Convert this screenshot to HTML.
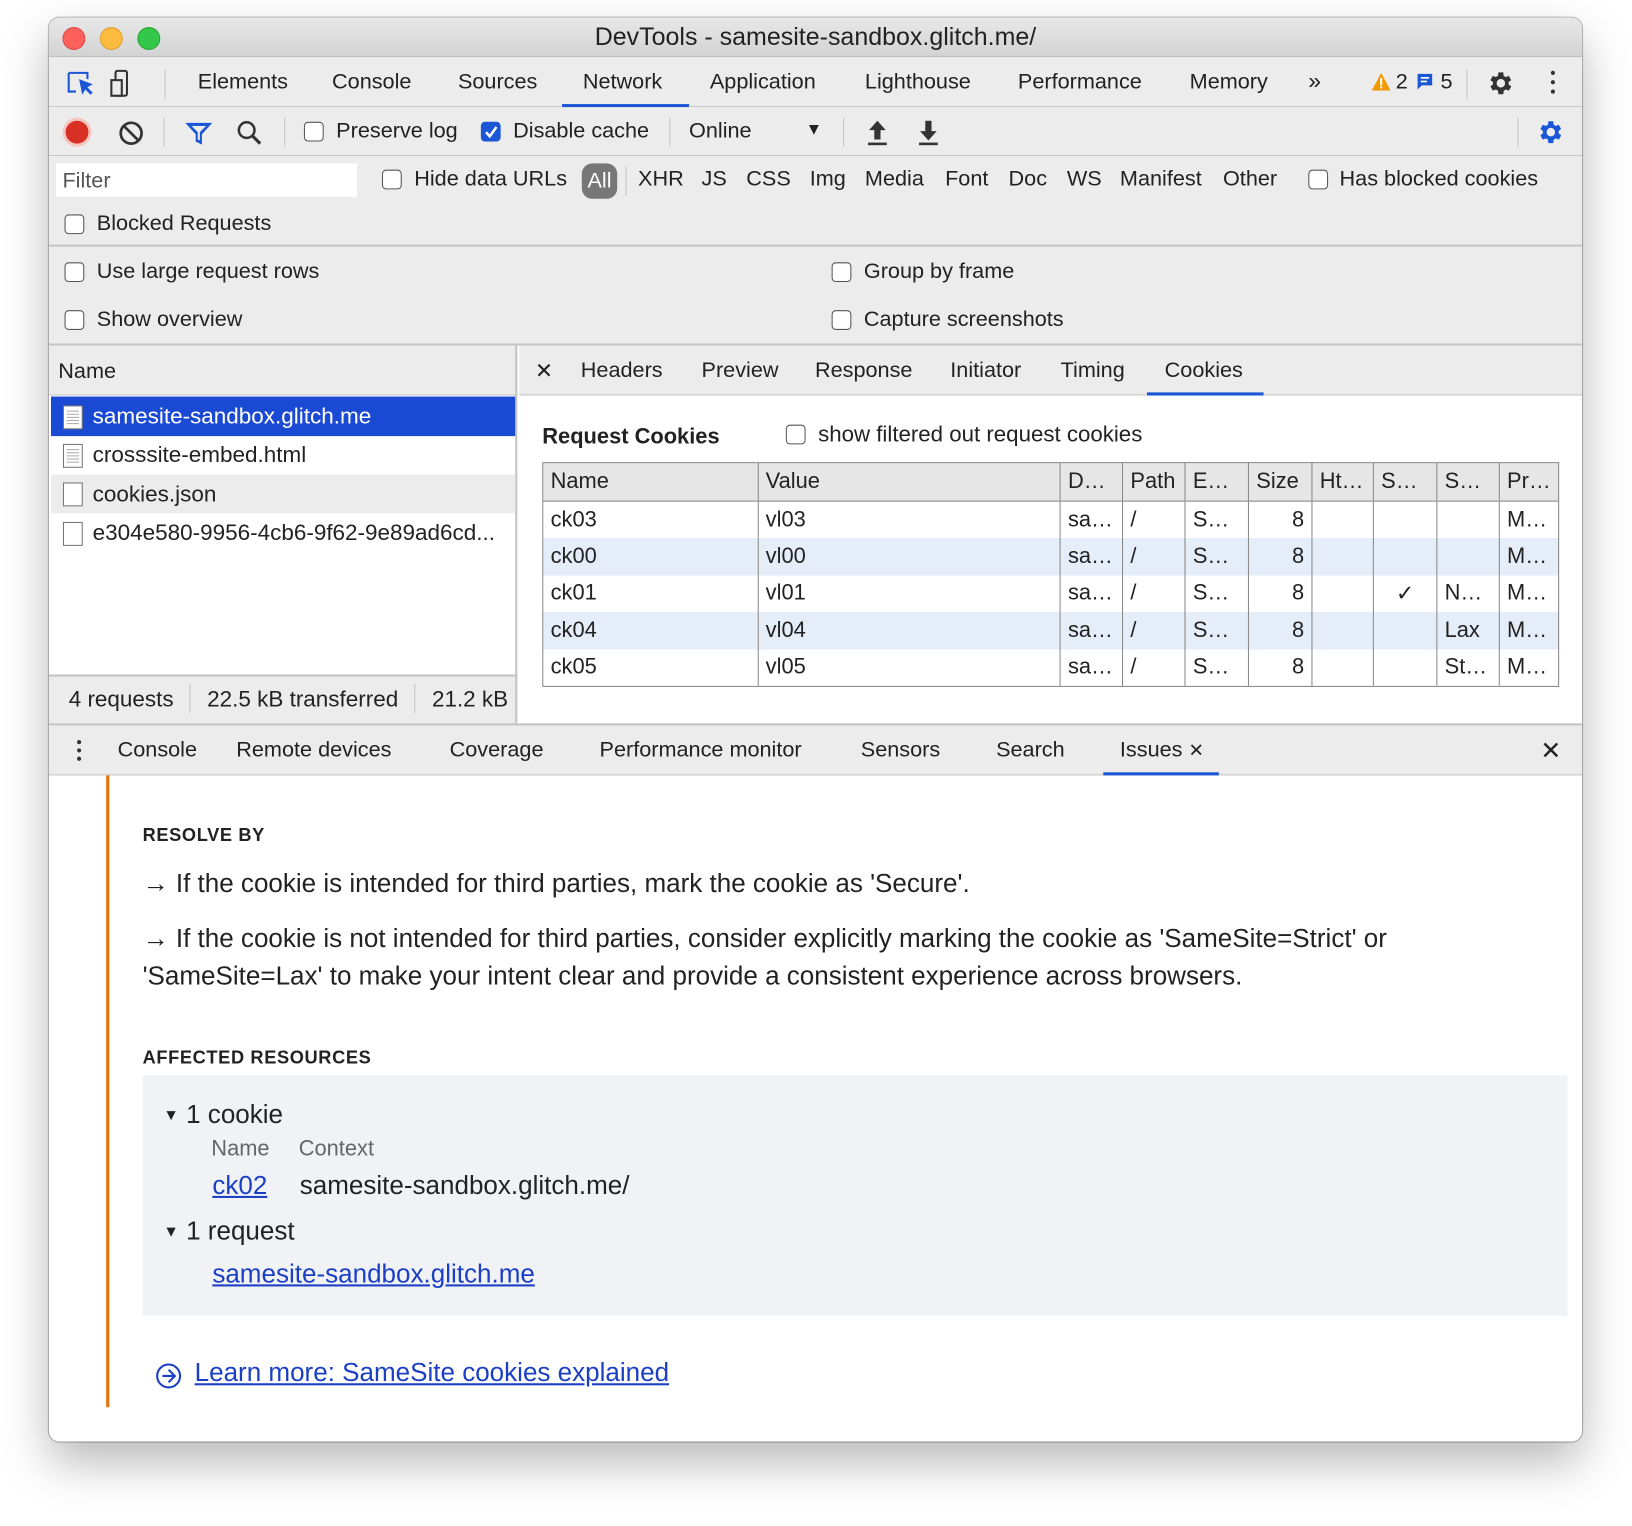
<!DOCTYPE html>
<html><head><meta charset="utf-8"><style>
*{box-sizing:border-box;margin:0;padding:0}
html,body{width:1632px;height:1525px;overflow:hidden;background:#fff}
#w{position:absolute;left:0;top:0;width:1568px;height:1466px;transform:scale(1.04082);transform-origin:0 0;font-family:"Liberation Sans",sans-serif;font-size:20.8px;color:#222}
.a{position:absolute;white-space:nowrap}
.win{position:absolute;left:47px;top:17px;width:1473px;height:1368px;border-radius:10px;overflow:hidden;background:#fff;box-shadow:0 20px 45px rgba(0,0,0,.28),0 0 0 1px #bbb}
.g{background:#ececec}
.cb{position:absolute;width:19px;height:19px;border:1.5px solid #555;border-radius:4px;background:#fff}
.hl{position:absolute;height:1px;background:#c4c4c4}
.vl{position:absolute;width:1px;background:#c4c4c4}
.dot{position:absolute;width:22px;height:22px;border-radius:50%}
.l{font-size:21.6px}
table{border-collapse:collapse}
td{border-left:1.5px solid #888;padding:0 7px;height:35.5px;font-size:21px}
.i{font-size:25px}
</style></head><body><div id="w">
<div class="win">
<div class="a" style="left:0;top:0;width:1473px;height:38px;background:linear-gradient(#e8e8e8,#d3d3d3);border-bottom:1px solid #b5b5b5"></div>
<div class="dot" style="left:13px;top:9px;background:#fc605c;border:1px solid #de4a46"></div>
<div class="dot" style="left:49px;top:9px;background:#fdbc40;border:1px solid #de9f2f"></div>
<div class="dot" style="left:85px;top:9px;background:#34c84a;border:1px solid #25a636"></div>
<div class="a" style="left:0;width:1473px;top:5px;text-align:center;font-size:24px;color:#222">DevTools - samesite-sandbox.glitch.me/</div>
<div class="a g" style="left:0;top:38px;width:1473px;height:48px;border-bottom:1px solid #c4c4c4"></div>
<svg class="a" style="left:16px;top:50px" width="60" height="28" viewBox="0 0 60 28"><path d="M3 3h18v6M3 3v18h7" fill="none" stroke="#1a56d6" stroke-width="2"/><path d="M13 9l3 15 3-5 5 5 2-2-5-5 5-3z" fill="#1a56d6"/><rect x="53" y="1" width="11" height="24" rx="2" fill="none" stroke="#333" stroke-width="2" transform="translate(-5 0)"/><rect x="44" y="10" width="10" height="15" fill="#ececec" stroke="#333" stroke-width="2"/></svg>
<div class="vl" style="left:111px;top:50px;height:28px"></div>
<div class="a" style="left:143px;top:50px">Elements</div>
<div class="a" style="left:272px;top:50px">Console</div>
<div class="a" style="left:393px;top:50px">Sources</div>
<div class="a" style="left:513px;top:50px">Network</div>
<div class="a" style="left:493px;top:83px;width:122px;height:3px;background:#1a56d6"></div>
<div class="a" style="left:635px;top:50px">Application</div>
<div class="a" style="left:784px;top:50px">Lighthouse</div>
<div class="a" style="left:931px;top:50px">Performance</div>
<div class="a" style="left:1096px;top:50px">Memory</div>
<div class="a" style="left:1210px;top:48px;font-size:22px">»</div>
<svg class="a" style="left:1270px;top:52px" width="20" height="20"><path d="M10 1L19 18H1z" fill="#f29900"/><rect x="9" y="6" width="2" height="7" fill="#fff"/><rect x="9" y="14" width="2" height="2" fill="#fff"/></svg>
<div class="a" style="left:1294px;top:50px">2</div>
<svg class="a" style="left:1313px;top:53px" width="18" height="18"><path d="M2 1h14v11H6l-4 4z" fill="#1a56d6"/><rect x="5" y="4" width="8" height="1.6" fill="#fff"/><rect x="5" y="7.5" width="6" height="1.6" fill="#fff"/></svg>
<div class="a" style="left:1337px;top:50px">5</div>
<div class="vl" style="left:1362px;top:50px;height:28px"></div>
<svg class="a" style="left:1381px;top:49px" width="28" height="28" viewBox="0 0 24 24"><path fill="#333" d="M19.4 13a7.5 7.5 0 000-2l2.1-1.6-2-3.5-2.5 1a7 7 0 00-1.7-1L15 3h-4l-.4 2.9a7 7 0 00-1.7 1l-2.5-1-2 3.5L6.5 11a7.5 7.5 0 000 2l-2.1 1.6 2 3.5 2.5-1a7 7 0 001.7 1L11 21h4l.4-2.9a7 7 0 001.7-1l2.5 1 2-3.5zM13 15.5a3.5 3.5 0 110-7 3.5 3.5 0 010 7z" transform="translate(-1 0)"/></svg>
<div class="a" style="left:1443px;top:51px;width:4px;height:4px;border-radius:2px;background:#333;box-shadow:0 9px 0 #333,0 18px 0 #333"></div>
<div class="a g" style="left:0;top:86px;width:1473px;height:47px;border-bottom:1px solid #c4c4c4"></div>
<div class="dot" style="left:16px;top:99px;background:#d93025;box-shadow:0 0 0 3px #f4c6c2"></div>
<svg class="a" style="left:66px;top:98px" width="26" height="26"><circle cx="13" cy="13" r="10" fill="none" stroke="#333" stroke-width="2.6"/><path d="M6 6l14 14" stroke="#333" stroke-width="2.6"/></svg>
<div class="vl" style="left:110px;top:96px;height:28px"></div>
<svg class="a" style="left:130px;top:99px" width="28" height="24"><path d="M1 2h26L17 13v10l-6-3v-7z" fill="#1a56d6"/><path d="M7 5h14l-6 6v8l-2-1v-7z" fill="#ececec"/></svg>
<svg class="a" style="left:180px;top:98px" width="26" height="26"><circle cx="10" cy="10" r="7.5" fill="none" stroke="#333" stroke-width="2.4"/><path d="M15 15l8 8" stroke="#333" stroke-width="3"/></svg>
<div class="vl" style="left:226px;top:96px;height:28px"></div>
<div class="cb" style="left:245px;top:100px"></div>
<div class="a" style="left:276px;top:97px">Preserve log</div>
<div class="cb" style="left:415px;top:100px;background:#1a56d6;border-color:#1a56d6"></div>
<svg class="a" style="left:418px;top:103px" width="14" height="14"><path d="M2 7l3.5 4L12 2" fill="none" stroke="#fff" stroke-width="2.4"/></svg>
<div class="a" style="left:446px;top:97px">Disable cache</div>
<div class="vl" style="left:596px;top:96px;height:28px"></div>
<div class="a" style="left:615px;top:97px">Online</div>
<div class="a" style="left:727px;top:99px;font-size:16px">▼</div>
<div class="vl" style="left:763px;top:96px;height:28px"></div>
<svg class="a" style="left:785px;top:98px" width="22" height="26"><path d="M11 1L3 10h5v9h6v-9h5z" fill="#333"/><rect x="2" y="22" width="18" height="2.5" fill="#333"/></svg>
<svg class="a" style="left:834px;top:98px" width="22" height="26"><path d="M11 20L3 11h5V1h6v10h5z" fill="#333"/><rect x="2" y="22" width="18" height="2.5" fill="#333"/></svg>
<div class="vl" style="left:1411px;top:96px;height:28px"></div>
<svg class="a" style="left:1429px;top:96px" width="28" height="28" viewBox="0 0 24 24"><path fill="#1a56d6" d="M19.4 13a7.5 7.5 0 000-2l2.1-1.6-2-3.5-2.5 1a7 7 0 00-1.7-1L15 3h-4l-.4 2.9a7 7 0 00-1.7 1l-2.5-1-2 3.5L6.5 11a7.5 7.5 0 000 2l-2.1 1.6 2 3.5 2.5-1a7 7 0 001.7 1L11 21h4l.4-2.9a7 7 0 001.7-1l2.5 1 2-3.5zM13 15.5a3.5 3.5 0 110-7 3.5 3.5 0 010 7z" transform="translate(-1 0)"/></svg>
<div class="a g" style="left:0;top:133px;width:1473px;height:87px;border-bottom:2px solid #c4c4c4"></div>
<div class="a" style="left:7px;top:140px;width:289px;height:32px;background:#fff"></div>
<div class="a" style="left:13px;top:145px;color:#555">Filter</div>
<div class="cb" style="left:320px;top:146px"></div>
<div class="a" style="left:351px;top:143px">Hide data URLs</div>
<div class="a" style="left:512px;top:140px;width:34px;height:34px;border-radius:10px;background:#777;color:#fff;text-align:center;line-height:34px">All</div>
<div class="vl" style="left:554px;top:143px;height:28px"></div>
<div class="a" style="left:566px;top:143px">XHR</div>
<div class="a" style="left:627px;top:143px">JS</div>
<div class="a" style="left:670px;top:143px">CSS</div>
<div class="a" style="left:731px;top:143px">Img</div>
<div class="a" style="left:784px;top:143px">Media</div>
<div class="a" style="left:861px;top:143px">Font</div>
<div class="a" style="left:922px;top:143px">Doc</div>
<div class="a" style="left:978px;top:143px">WS</div>
<div class="a" style="left:1029px;top:143px">Manifest</div>
<div class="a" style="left:1128px;top:143px">Other</div>
<div class="cb" style="left:1210px;top:146px"></div>
<div class="a" style="left:1240px;top:143px">Has blocked cookies</div>
<div class="cb" style="left:15px;top:189px"></div>
<div class="a" style="left:46px;top:186px">Blocked Requests</div>
<div class="a g" style="left:0;top:220px;width:1473px;height:95px;border-bottom:2px solid #c4c4c4"></div>
<div class="cb" style="left:15px;top:235px"></div><div class="a" style="left:46px;top:232px">Use large request rows</div>
<div class="cb" style="left:752px;top:235px"></div><div class="a" style="left:783px;top:232px">Group by frame</div>
<div class="cb" style="left:15px;top:281px"></div><div class="a" style="left:46px;top:278px">Show overview</div>
<div class="cb" style="left:752px;top:281px"></div><div class="a" style="left:783px;top:278px">Capture screenshots</div>
<div class="a g" style="left:0;top:315px;width:450px;height:48px;border-bottom:1px solid #c4c4c4;border-right:2px solid #c4c4c4"></div>
<div class="a" style="left:9px;top:328px">Name</div>
<div class="a" style="left:0;top:363px;width:450px;height:268px;background:#fff;border-right:2px solid #c4c4c4"></div>
<div class="a" style="left:2px;top:364px;width:446px;height:38px;background:#1a49d4"></div>
<div class="a" style="left:2px;top:439px;width:446px;height:37px;background:#ececec"></div>
<svg class="a" style="left:13px;top:372px" width="20" height="24"><rect x="1" y="1" width="18" height="22" fill="#fff" stroke="#777"/><path d="M4 6h12M4 9h12M4 12h12M4 15h12M4 18h12" stroke="#aaa"/></svg>
<div class="a l" style="left:42px;top:370px;color:#fff">samesite-sandbox.glitch.me</div>
<svg class="a" style="left:13px;top:409px" width="20" height="24"><rect x="1" y="1" width="18" height="22" fill="#fff" stroke="#777"/><path d="M4 6h12M4 9h12M4 12h12M4 15h12M4 18h12" stroke="#aaa"/></svg>
<div class="a l" style="left:42px;top:407px">crosssite-embed.html</div>
<svg class="a" style="left:13px;top:446px" width="20" height="24"><rect x="1" y="1" width="18" height="22" fill="#fff" stroke="#777"/></svg>
<div class="a l" style="left:42px;top:445px">cookies.json</div>
<svg class="a" style="left:13px;top:484px" width="20" height="24"><rect x="1" y="1" width="18" height="22" fill="#fff" stroke="#777"/></svg>
<div class="a l" style="left:42px;top:482px">e304e580-9956-4cb6-9f62-9e89ad6cd...</div>
<div class="a g" style="left:0;top:631px;width:450px;height:48px;border-top:2px solid #c4c4c4;border-right:2px solid #c4c4c4"></div>
<div class="a l" style="left:19px;top:642px">4 requests</div>
<div class="vl" style="left:135px;top:640px;height:28px"></div>
<div class="a l" style="left:152px;top:642px">22.5 kB transferred</div>
<div class="vl" style="left:351px;top:640px;height:28px"></div>
<div class="a l" style="left:368px;top:642px">21.2 kB</div>
<div class="a g" style="left:452px;top:315px;width:1021px;height:48px;border-bottom:1px solid #c4c4c4"></div>
<div class="a" style="left:467px;top:327px">✕</div>
<div class="a" style="left:511px;top:327px">Headers</div>
<div class="a" style="left:627px;top:327px">Preview</div>
<div class="a" style="left:736px;top:327px">Response</div>
<div class="a" style="left:866px;top:327px">Initiator</div>
<div class="a" style="left:972px;top:327px">Timing</div>
<div class="a" style="left:1072px;top:327px">Cookies</div>
<div class="a" style="left:1055px;top:360px;width:112px;height:3px;background:#1a56d6"></div>
<div class="a" style="left:474px;top:391px;font-weight:bold;font-size:21px">Request Cookies</div>
<div class="cb" style="left:708px;top:391px"></div>
<div class="a" style="left:739px;top:388px;font-size:21.4px">show filtered out request cookies</div>
<table class="a" style="left:474px;top:427px;width:977px;border:1.5px solid #888">
<colgroup><col style="width:207px"><col style="width:291px"><col style="width:60px"><col style="width:60px"><col style="width:61px"><col style="width:61px"><col style="width:59px"><col style="width:61px"><col style="width:60px"><col style="width:57px"></colgroup>
<tr style="background:#e6e6e6;border-bottom:1.5px solid #888;height:37px"><td>Name</td><td>Value</td><td>D…</td><td>Path</td><td>E…</td><td>Size</td><td>Ht…</td><td>S…</td><td>S…</td><td>Pr…</td></tr>
<tr><td>ck03</td><td>vl03</td><td>sa…</td><td>/</td><td>S…</td><td style="text-align:right">8</td><td></td><td></td><td></td><td>M…</td></tr>
<tr style="background:#e5edf9"><td>ck00</td><td>vl00</td><td>sa…</td><td>/</td><td>S…</td><td style="text-align:right">8</td><td></td><td></td><td></td><td>M…</td></tr>
<tr><td>ck01</td><td>vl01</td><td>sa…</td><td>/</td><td>S…</td><td style="text-align:right">8</td><td></td><td style="text-align:center">✓</td><td>N…</td><td>M…</td></tr>
<tr style="background:#e5edf9"><td>ck04</td><td>vl04</td><td>sa…</td><td>/</td><td>S…</td><td style="text-align:right">8</td><td></td><td></td><td>Lax</td><td>M…</td></tr>
<tr><td>ck05</td><td>vl05</td><td>sa…</td><td>/</td><td>S…</td><td style="text-align:right">8</td><td></td><td></td><td>St…</td><td>M…</td></tr>
</table>
<div class="a g" style="left:0;top:678px;width:1473px;height:50px;border-top:2px solid #c4c4c4;border-bottom:1px solid #c4c4c4"></div>
<div class="a" style="left:27px;top:694px;width:4px;height:4px;border-radius:2px;background:#333;box-shadow:0 8px 0 #333,0 16px 0 #333"></div>
<div class="a" style="left:66px;top:692px">Console</div>
<div class="a" style="left:180px;top:692px">Remote devices</div>
<div class="a" style="left:385px;top:692px">Coverage</div>
<div class="a" style="left:529px;top:692px">Performance monitor</div>
<div class="a" style="left:780px;top:692px">Sensors</div>
<div class="a" style="left:910px;top:692px">Search</div>
<div class="a" style="left:1029px;top:692px">Issues <span style="font-size:18px">✕</span></div>
<div class="a" style="left:1013px;top:725px;width:111px;height:3px;background:#1a56d6"></div>
<div class="a" style="left:1433px;top:690px;font-size:24px">✕</div>
<div class="a" style="left:55px;top:728px;width:3px;height:607px;background:#e8710a"></div>
<div class="a" style="left:90px;top:775px;font-size:17.5px;font-weight:bold;letter-spacing:.6px">RESOLVE BY</div>
<div class="a i" style="left:90px;top:818px">→ If the cookie is intended for third parties, mark the cookie as 'Secure'.</div>
<div class="a i" style="left:90px;top:867px;line-height:36px">→ If the cookie is not intended for third parties, consider explicitly marking the cookie as 'SameSite=Strict' or<br>'SameSite=Lax' to make your intent clear and provide a consistent experience across browsers.</div>
<div class="a" style="left:90px;top:989px;font-size:17.5px;font-weight:bold;letter-spacing:.6px">AFFECTED RESOURCES</div>
<div class="a" style="left:90px;top:1016px;width:1369px;height:231px;background:#f1f2f5"></div>
<div class="a i" style="left:110px;top:1040px"><span style="font-size:15px;vertical-align:3px">▼</span> 1 cookie</div>
<div class="a" style="left:156px;top:1075px;color:#666;font-size:21px">Name</div>
<div class="a" style="left:240px;top:1075px;color:#666;font-size:21px">Context</div>
<div class="a i" style="left:157px;top:1108px;color:#1a3fc4;text-decoration:underline">ck02</div>
<div class="a i" style="left:241px;top:1108px">samesite-sandbox.glitch.me/</div>
<div class="a i" style="left:110px;top:1152px"><span style="font-size:15px;vertical-align:3px">▼</span> 1 request</div>
<div class="a i" style="left:157px;top:1193px;color:#1a3fc4;text-decoration:underline">samesite-sandbox.glitch.me</div>
<svg class="a" style="left:101px;top:1291px" width="28" height="28"><circle cx="14" cy="14" r="11" fill="none" stroke="#1a3fc4" stroke-width="2"/><path d="M8 14h12M14 8l6 6-6 6" fill="none" stroke="#1a3fc4" stroke-width="2"/></svg>
<div class="a i" style="left:140px;top:1288px;color:#1a3fc4;text-decoration:underline">Learn more: SameSite cookies explained</div>
</div>
</div></body></html>
